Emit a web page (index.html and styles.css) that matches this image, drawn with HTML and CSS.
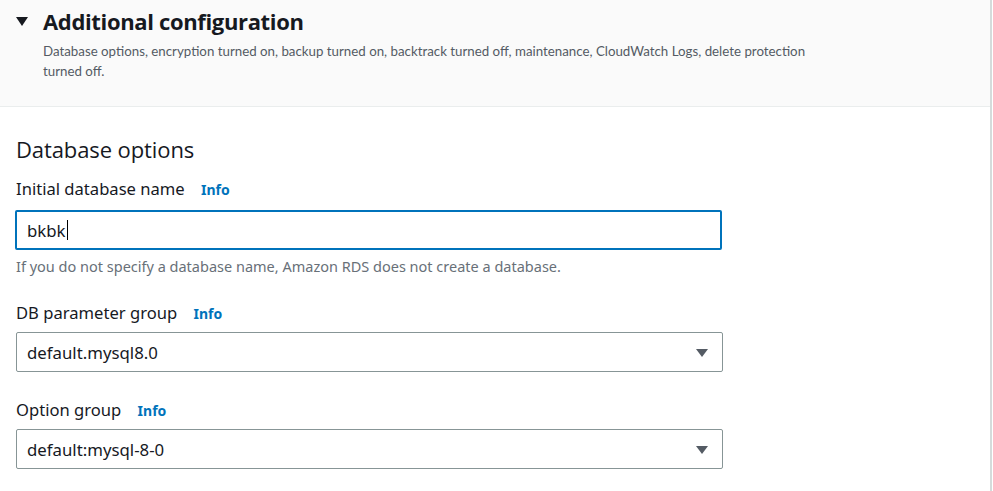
FILE: index.html
```html
<!DOCTYPE html>
<html>
<head>
<meta charset="utf-8">
<link rel="stylesheet" href="styles.css">
</head>
<body>
<div class="panel">
  <div class="header">
    <div class="title-row">
      <svg class="caret-down" width="12" height="9" viewBox="0 0 12 9"><polygon points="0,0 12,0 6,9" fill="#16191f"/></svg>
      <h2 class="title">Additional configuration</h2>
    </div>
    <p class="desc">Database options, encryption turned on, backup turned on, backtrack turned off, maintenance, CloudWatch Logs, delete protection turned off.</p>
  </div>
  <div class="content">
    <h3 class="section">Database options</h3>
    <div class="field first">
      <div class="label">Initial database name <a class="info">Info</a></div>
      <div class="input focused"><span class="val">bkbk</span><span class="cursor"></span></div>
      <div class="hint">If you do not specify a database name, Amazon RDS does not create a database.</div>
    </div>
    <div class="field">
      <div class="label">DB parameter group <a class="info">Info</a></div>
      <div class="input select"><span class="val">default.mysql8.0</span><svg class="arrow" width="12" height="8" viewBox="0 0 12 8"><polygon points="0,0 12,0 6,8" fill="#545b64"/></svg></div>
    </div>
    <div class="field last">
      <div class="label">Option group <a class="info">Info</a></div>
      <div class="input select"><span class="val">default:mysql-8-0</span><svg class="arrow" width="12" height="8" viewBox="0 0 12 8"><polygon points="0,0 12,0 6,8" fill="#545b64"/></svg></div>
    </div>
  </div>
</div>
</body>
</html>
```
FILE: styles.css
```css
* { box-sizing: border-box; }
html, body { margin: 0; padding: 0; background: #fff; }
body {
  font-family: "Noto Sans", "Open Sans", sans-serif;
  color: #16191f;
  width: 993px;
  height: 491px;
  overflow: hidden;
}
.panel {
  width: 992px;
  height: 491px;
  border-right: 2px solid #d5dbdb;
}
.header {
  background: #fafafa;
  border-bottom: 1px solid #eaeded;
  height: 107px;
  padding: 7px 0 0 16px;
}
.title-row {
  display: flex;
  align-items: center;
  height: 28px;
}
.caret-down { margin-right: 15px; margin-top: 1px; }
.title {
  margin: 0;
  font-family: "Open Sans", "Noto Sans", sans-serif;
  font-size: 22px;
  font-weight: 700;
  line-height: 28px;
  letter-spacing: -0.35px;
}
.desc {
  margin: 6px 0 0 27px;
  font-family: "Lato", "Open Sans", sans-serif;
  font-size: 13.3px;
  line-height: 20px;
  color: #545b64;
  max-width: 785px;
}
.content {
  padding: 28px 0 0 16px;
}
.section {
  margin: 0;
  font-family: "Open Sans", "Noto Sans", sans-serif;
  font-size: 22px;
  font-weight: 400;
  line-height: 28px;
  letter-spacing: -0.1px;
}
.field { margin-top: 26px; }
.field.first { margin-top: 15px; }
.field.last { margin-top: 27px; }
.label {
  font-size: 16.6px;
  line-height: 22px;
  margin-bottom: 7px;
}
.field.first .label { margin-bottom: 0; }
.info {
  color: #0073bb;
  font-weight: 700;
  font-size: 14px;
  margin-left: 12px;
}
.input {
  width: 707px;
  height: 40px;
  border: 1px solid #879596;
  border-radius: 2px;
  display: flex;
  align-items: center;
  padding: 0 14px 0 10px;
  font-size: 16.8px;
  color: #16191f;
}
.input.focused {
  border: 2px solid #0073bb;
  margin-left: -1px;
  margin-top: 9px;
  padding-left: 10px;
}
.cursor {
  display: inline-block;
  width: 1px;
  height: 20px;
  background: #000;
  margin-left: 1px;
}
.select { justify-content: space-between; }
.arrow { margin-top: 1px; }
.hint {
  margin-top: 6px;
  font-size: 14.5px;
  line-height: 20px;
  color: #687078;
}
```
